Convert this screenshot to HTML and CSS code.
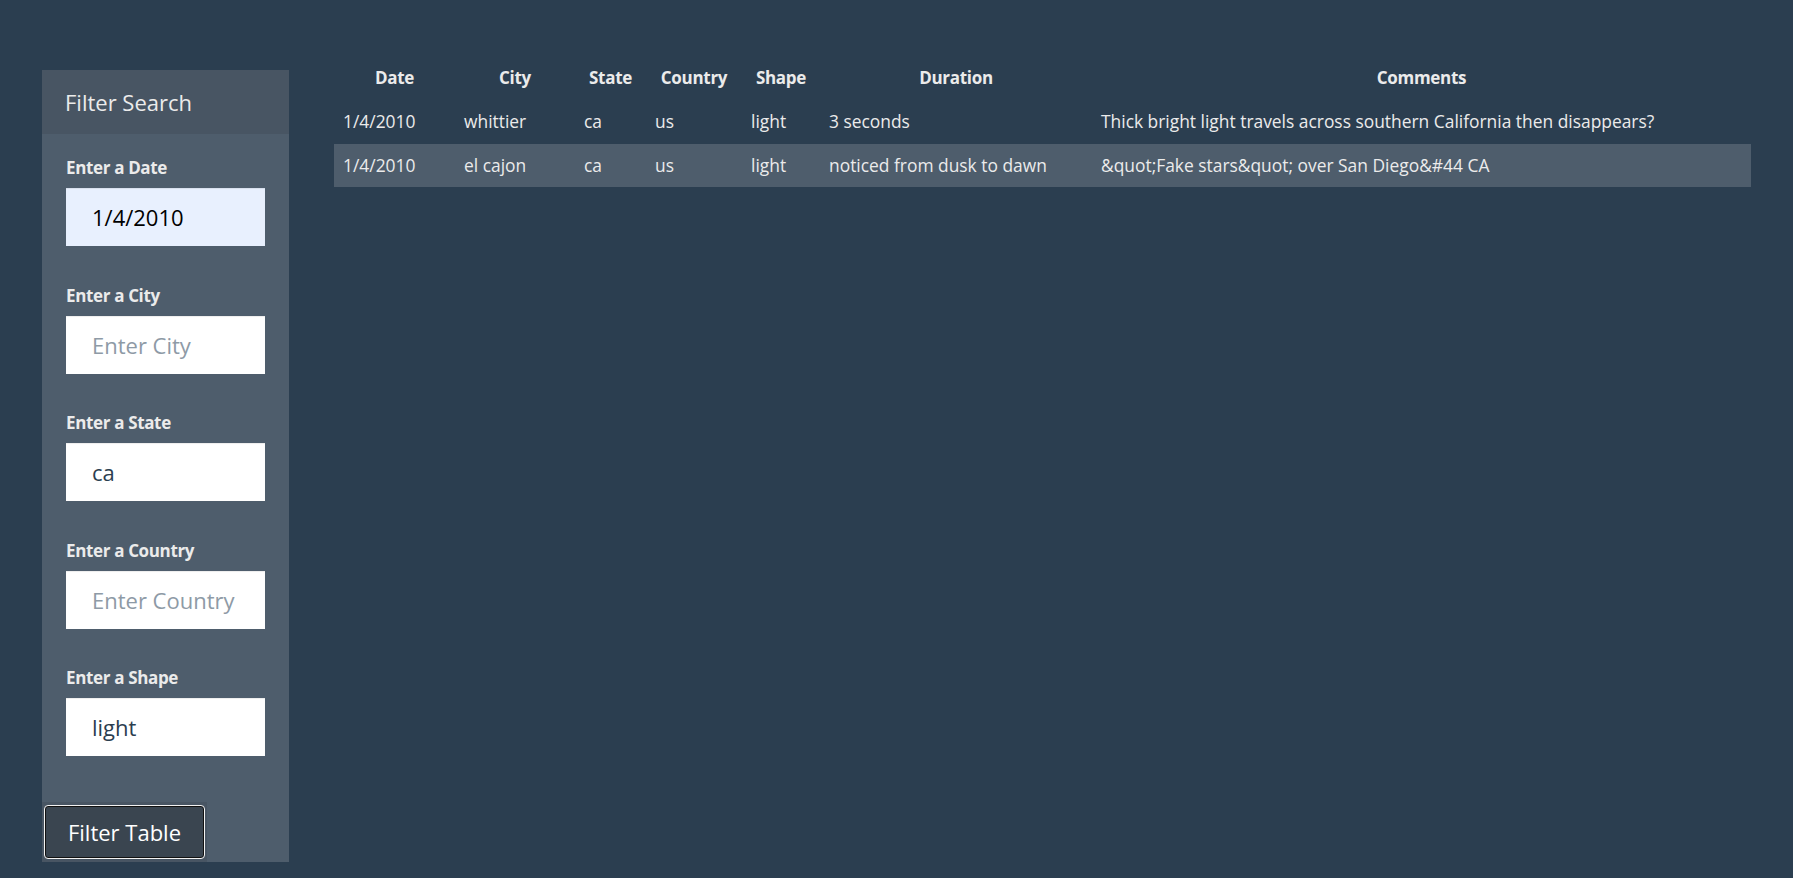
FILE: index.html
```html
<!DOCTYPE html>
<html lang="en">
<head>
<meta charset="utf-8">
<title>UFO Sightings</title>
<link rel="stylesheet" href="styles.css">
</head>
<body>
<div class="page">
  <aside class="panel">
    <div class="panel-heading">Filter Search</div>
    <form class="panel-body">
      <div class="form-group">
        <label class="label" for="date">Enter a Date</label>
        <input class="input input-autofill" id="date" type="text" value="1/4/2010" placeholder="Enter Date">
      </div>
      <div class="form-group">
        <label class="label" for="city">Enter a City</label>
        <input class="input" id="city" type="text" placeholder="Enter City">
      </div>
      <div class="form-group">
        <label class="label" for="state">Enter a State</label>
        <input class="input" id="state" type="text" value="ca" placeholder="Enter State">
      </div>
      <div class="form-group">
        <label class="label" for="country">Enter a Country</label>
        <input class="input" id="country" type="text" placeholder="Enter Country">
      </div>
      <div class="form-group">
        <label class="label" for="shape">Enter a Shape</label>
        <input class="input" id="shape" type="text" value="light" placeholder="Enter Shape">
      </div>
    </form>
    <div class="panel-footer">
      <button class="btn" type="button">Filter Table</button>
    </div>
  </aside>
  <main class="content">
    <table class="table">
      <thead>
        <tr>
          <th class="c-date">Date</th>
          <th class="c-city">City</th>
          <th class="c-state">State</th>
          <th class="c-country">Country</th>
          <th class="c-shape">Shape</th>
          <th class="c-duration">Duration</th>
          <th class="c-comments">Comments</th>
        </tr>
      </thead>
      <tbody>
        <tr>
          <td>1/4/2010</td>
          <td>whittier</td>
          <td>ca</td>
          <td>us</td>
          <td>light</td>
          <td>3 seconds</td>
          <td>Thick bright light travels across southern California then disappears?</td>
        </tr>
        <tr class="striped">
          <td>1/4/2010</td>
          <td>el cajon</td>
          <td>ca</td>
          <td>us</td>
          <td>light</td>
          <td>noticed from dusk to dawn</td>
          <td>&amp;quot;Fake stars&amp;quot; over San Diego&amp;#44 CA</td>
        </tr>
      </tbody>
    </table>
  </main>
</div>
</body>
</html>
```

FILE: styles.css
```css
* { box-sizing: border-box; }

html, body {
  margin: 0;
  padding: 0;
  background: #2b3e50;
}

body {
  font-family: "Open Sans", "Noto Sans", sans-serif;
  color: #ebebeb;
  font-size: 17.4px;
  line-height: 25px;
  height: 878px;
  overflow: hidden;
}

.page {
  display: grid;
  grid-template-columns: 247px 1fr;
  column-gap: 45px;
  padding: 55px 42px 0 42px;
  align-items: start;
}

/* Sidebar panel */
.panel {
  margin-top: 15px;
  background: #4e5d6c;
  display: flex;
  flex-direction: column;
  height: 792px;
}

.panel-heading {
  background: #485563;
  height: 64px;
  padding: 0 23px;
  display: flex;
  align-items: center;
  font-size: 22px;
  color: #ebebeb;
}

.panel-body {
  padding: 22px 24px 0 24px;
  margin: 0;
  flex: 1;
}

.form-group {
  display: flex;
  flex-direction: column;
  margin-bottom: 37.5px;
}

.label {
  font-weight: 700;
  font-size: 17px;
  line-height: 24px;
  margin-bottom: 8px;
  color: #ebebeb;
  letter-spacing: -0.35px;
}

.input {
  width: 199px;
  height: 58px;
  border: 0;
  border-radius: 0;
  background: #ffffff;
  padding: 0 0 0 26px;
  font-family: "Open Sans", sans-serif;
  font-size: 22px;
  color: #2b3e50;
  box-shadow: inset 0 1px 1px rgba(0,0,0,0.075);
  outline: none;
}

.input::placeholder {
  color: #8e9aa6;
}

.input-autofill {
  background: #e8f0fe;
  color: #000;
}

.panel-footer {
  align-self: flex-start;
  background: #485563;
  padding: 3px 2px 3px 2px;
}

.btn {
  display: block;
  width: 161px;
  height: 54px;
  background: #3a4550;
  color: #ffffff;
  border: 1px solid #f2f2f2;
  box-shadow: inset 0 0 0 1px #111;
  border-radius: 4px;
  font-family: "Open Sans", sans-serif;
  font-size: 22px;
  padding: 0;
  margin: 0;
  cursor: pointer;
}

/* Table */
.content {
  min-width: 0;
}

.table {
  width: 1417px;
  border-collapse: collapse;
  table-layout: fixed;
}

.table th,
.table td {
  padding: 9px;
  line-height: 25px;
  border-top: 1px solid transparent;
  white-space: nowrap;
  overflow: hidden;
}

.table th {
  font-weight: 700;
  font-size: 17px;
  text-align: center;
  letter-spacing: -0.3px;
}

.table td {
  text-align: left;
}

.table .striped {
  background: #4e5d6c;
}

.c-date { width: 121px; }
.c-city { width: 120px; }
.c-state { width: 71px; }
.c-country { width: 96px; }
.c-shape { width: 78px; }
.c-duration { width: 272px; }
.c-comments { width: 659px; }
```
